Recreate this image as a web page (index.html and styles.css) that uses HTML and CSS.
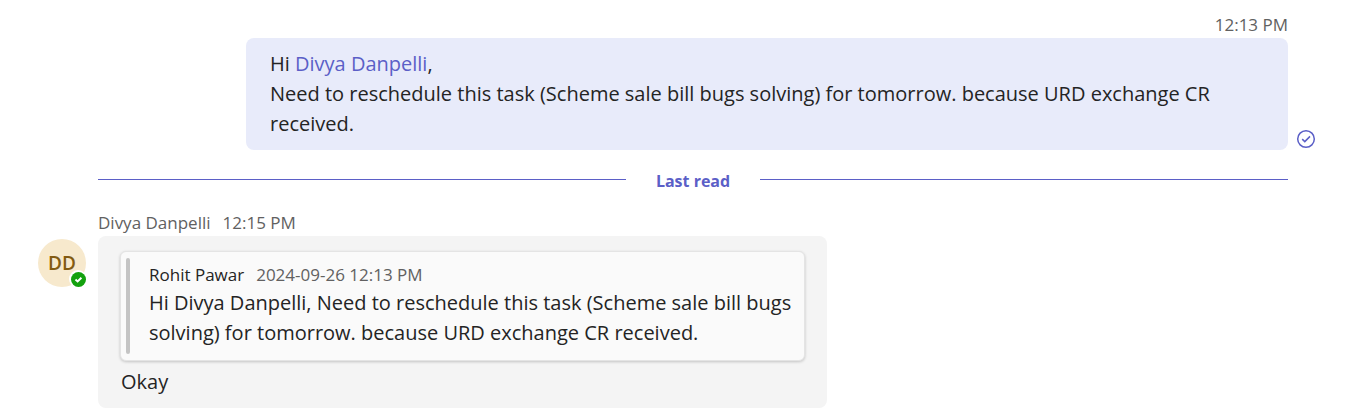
FILE: index.html
```html
<!DOCTYPE html>
<html lang="en">
<head>
<meta charset="utf-8">
<title>Chat</title>
<link rel="stylesheet" href="styles.css">
</head>
<body>
<main class="chat">
  <article class="sent">
    <time class="sent-time">12:13 PM</time>
    <div class="sent-row">
      <div class="bubble bubble-sent">
        <p>Hi <a class="mention" href="#">Divya Danpelli</a>,</p>
        <p>Need to reschedule this task (Scheme sale bill bugs solving) for tomorrow. because URD exchange CR received.</p>
      </div>
      <svg class="status" viewBox="0 0 20 20" role="img" aria-label="Sent"><circle cx="10" cy="10" r="8.3"/><path d="M6.2 10.1 8.8 12.6 14 7.4"/></svg>
    </div>
  </article>
  <div class="divider"><span>Last read</span></div>
  <article class="received">
    <div class="avatar">DD
      <svg class="presence" viewBox="0 0 18 18" role="img" aria-label="Available"><circle cx="9" cy="9" r="9" fill="#fff"/><circle cx="9.5" cy="9.5" r="7.5" fill="#13a10e"/><path d="M6.5 9.6 8.6 11.4 12.4 7.7"/></svg>
    </div>
    <div class="received-body">
      <header class="meta"><span>Divya Danpelli</span><time>12:15 PM</time></header>
      <div class="bubble bubble-received">
        <blockquote class="quote">
          <div class="quote-meta"><span class="quote-name">Rohit Pawar</span><time>2024-09-26 12:13 PM</time></div>
          <p>Hi Divya Danpelli, Need to reschedule this task (Scheme sale bill bugs solving) for tomorrow. because URD exchange CR received.</p>
        </blockquote>
        <p class="reply">Okay</p>
      </div>
    </div>
  </article>
</main>
</body>
</html>
```
FILE: styles.css
```css
* { box-sizing: border-box; }
body { margin: 0; background: #fff; color: #242424; font: 20px/30px "Segoe UI", "Open Sans", "Noto Sans", sans-serif; }
p { margin: 0; }
.chat { padding: 12px 45px 6px 38px; }
.sent { display: flex; flex-direction: column; padding-left: 208px; }
.sent-time { align-self: flex-end; margin-right: 28px; font-size: 17px; line-height: 26px; color: #616161; }
.sent-row { display: flex; align-items: flex-end; gap: 8px; }
.bubble { border-radius: 8px; }
.bubble-sent { flex: 1; padding: 11px 24px; background: #e8ebfa; }
.mention { color: #5b5fc7; text-decoration: none; }
.status { width: 20px; height: 20px; margin: 0 0 1px; fill: none; stroke: #5b5fc7; stroke-width: 1.5; }
.divider { display: flex; align-items: center; gap: 30px; margin: 17px 28px 0 60px; color: #5b5fc7; font-size: 16px; font-weight: 700; line-height: 22px; }
.divider span { padding-top: 3px; }
.divider::before, .divider::after { content: ""; flex: 1; height: 1px; background: #5b5fc7; }
.received { display: flex; gap: 12px; align-items: flex-start; margin-top: 18px; }
.avatar { position: relative; flex: none; width: 48px; height: 48px; margin-top: 29px; border-radius: 50%; background: #f7e9cd; color: #835b12; font-size: 19px; font-weight: 600; line-height: 48px; text-align: center; }
.presence { position: absolute; right: -1px; bottom: -1px; width: 18px; height: 18px; fill: none; stroke-width: 2; }
.presence path { stroke: #fff; }
.meta { display: flex; gap: 12px; font-size: 17px; line-height: 26px; color: #616161; }
.received-body { max-width: 729px; }
.bubble-received { padding: 15px 22px 11px; background: #f4f4f4; }
.quote { position: relative; margin: 0 0 6px; padding: 10px 8px 12px 28px; border: 1px solid #e4e4e4; border-radius: 6px; background: #fafafa; box-shadow: 0 1px 3px #0003; }
.quote::before { content: ""; position: absolute; left: 5px; top: 6px; bottom: 6px; width: 4px; border-radius: 2px; background: #c4c4c4; }
.quote-meta { display: flex; gap: 12px; font-size: 17px; line-height: 26px; color: #616161; }
.quote-name { color: #242424; }
.reply { padding-left: 1px; }
```
